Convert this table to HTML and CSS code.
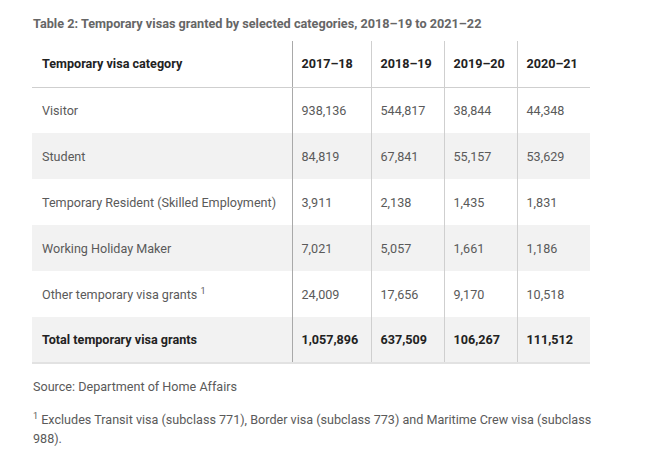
FILE: index.html
```html
<!DOCTYPE html>
<html>
<head>
<meta charset="utf-8">
<link rel="stylesheet" href="styles.css">
</head>
<body>
<div class="wrap">
  <h2 class="title">Table 2: Temporary visas granted by selected categories, 2018–19 to 2021–22</h2>
  <table class="visa">
    <thead>
      <tr>
        <th class="cat">Temporary visa category</th>
        <th class="c2">2017–18</th>
        <th>2018–19</th>
        <th>2019–20</th>
        <th>2020–21</th>
      </tr>
    </thead>
    <tbody>
      <tr><td class="cat">Visitor</td><td class="c2">938,136</td><td>544,817</td><td>38,844</td><td>44,348</td></tr>
      <tr class="alt"><td class="cat">Student</td><td class="c2">84,819</td><td>67,841</td><td>55,157</td><td>53,629</td></tr>
      <tr><td class="cat">Temporary Resident (Skilled Employment)</td><td class="c2">3,911</td><td>2,138</td><td>1,435</td><td>1,831</td></tr>
      <tr class="alt"><td class="cat">Working Holiday Maker</td><td class="c2">7,021</td><td>5,057</td><td>1,661</td><td>1,186</td></tr>
      <tr><td class="cat">Other temporary visa grants <sup>1</sup></td><td class="c2">24,009</td><td>17,656</td><td>9,170</td><td>10,518</td></tr>
      <tr class="alt total"><td class="cat">Total temporary visa grants</td><td class="c2">1,057,896</td><td>637,509</td><td>106,267</td><td>111,512</td></tr>
    </tbody>
  </table>
  <p class="source">Source: Department of Home Affairs</p>
  <p class="note"><sup>1</sup> Excludes Transit visa (subclass 771), Border visa (subclass 773) and Maritime Crew visa (subclass 988).</p>
</div>
</body>
</html>
```
FILE: styles.css
```css
html, body {
  margin: 0;
  padding: 0;
  background: #fff;
}
body {
  font-family: Roboto, "Liberation Sans", sans-serif;
  color: #5a5a5a;
}
.wrap {
  padding: 16px 0 0 32px;
  width: 570px;
}
.title {
  margin: 0 0 9px 1px;
  font-size: 12.7px;
  line-height: 16px;
  font-weight: 700;
  color: #666;
}
.visa {
  border-collapse: collapse;
  width: 558px;
  table-layout: fixed;
  font-size: 12.6px;
  border-bottom: 2px solid #e2e2e2;
}
.visa th, .visa td {
  height: 46px;
  padding: 0 0 0 9px;
  text-align: left;
  vertical-align: middle;
  border-left: 1px solid #cfcfcf;
  box-sizing: border-box;
}
.visa th.cat, .visa td.cat {
  border-left: none;
  width: 260px;
  padding-left: 10px;
}
.visa th.c2, .visa td.c2 {
  width: 79px;
  border-left-color: #a9a9a9;
}
.visa th {
  font-weight: 700;
  color: #222;
  border-bottom: 1px solid #cfcfcf;
}
.visa td {
  font-weight: 400;
  color: #5a5a5a;
}
.visa tr.alt td {
  background: #f2f2f2;
}
.visa tr.total td {
  font-weight: 700;
  color: #222;
}
.visa sup, .note sup {
  font-size: 9px;
  line-height: 0;
  vertical-align: 5px;
}
.source {
  margin: 14px 0 0 1px;
  font-size: 12.6px;
  line-height: 18px;
}
.note {
  margin: 14px 0 0 1px;
  font-size: 12.6px;
  line-height: 19px;
}
```
